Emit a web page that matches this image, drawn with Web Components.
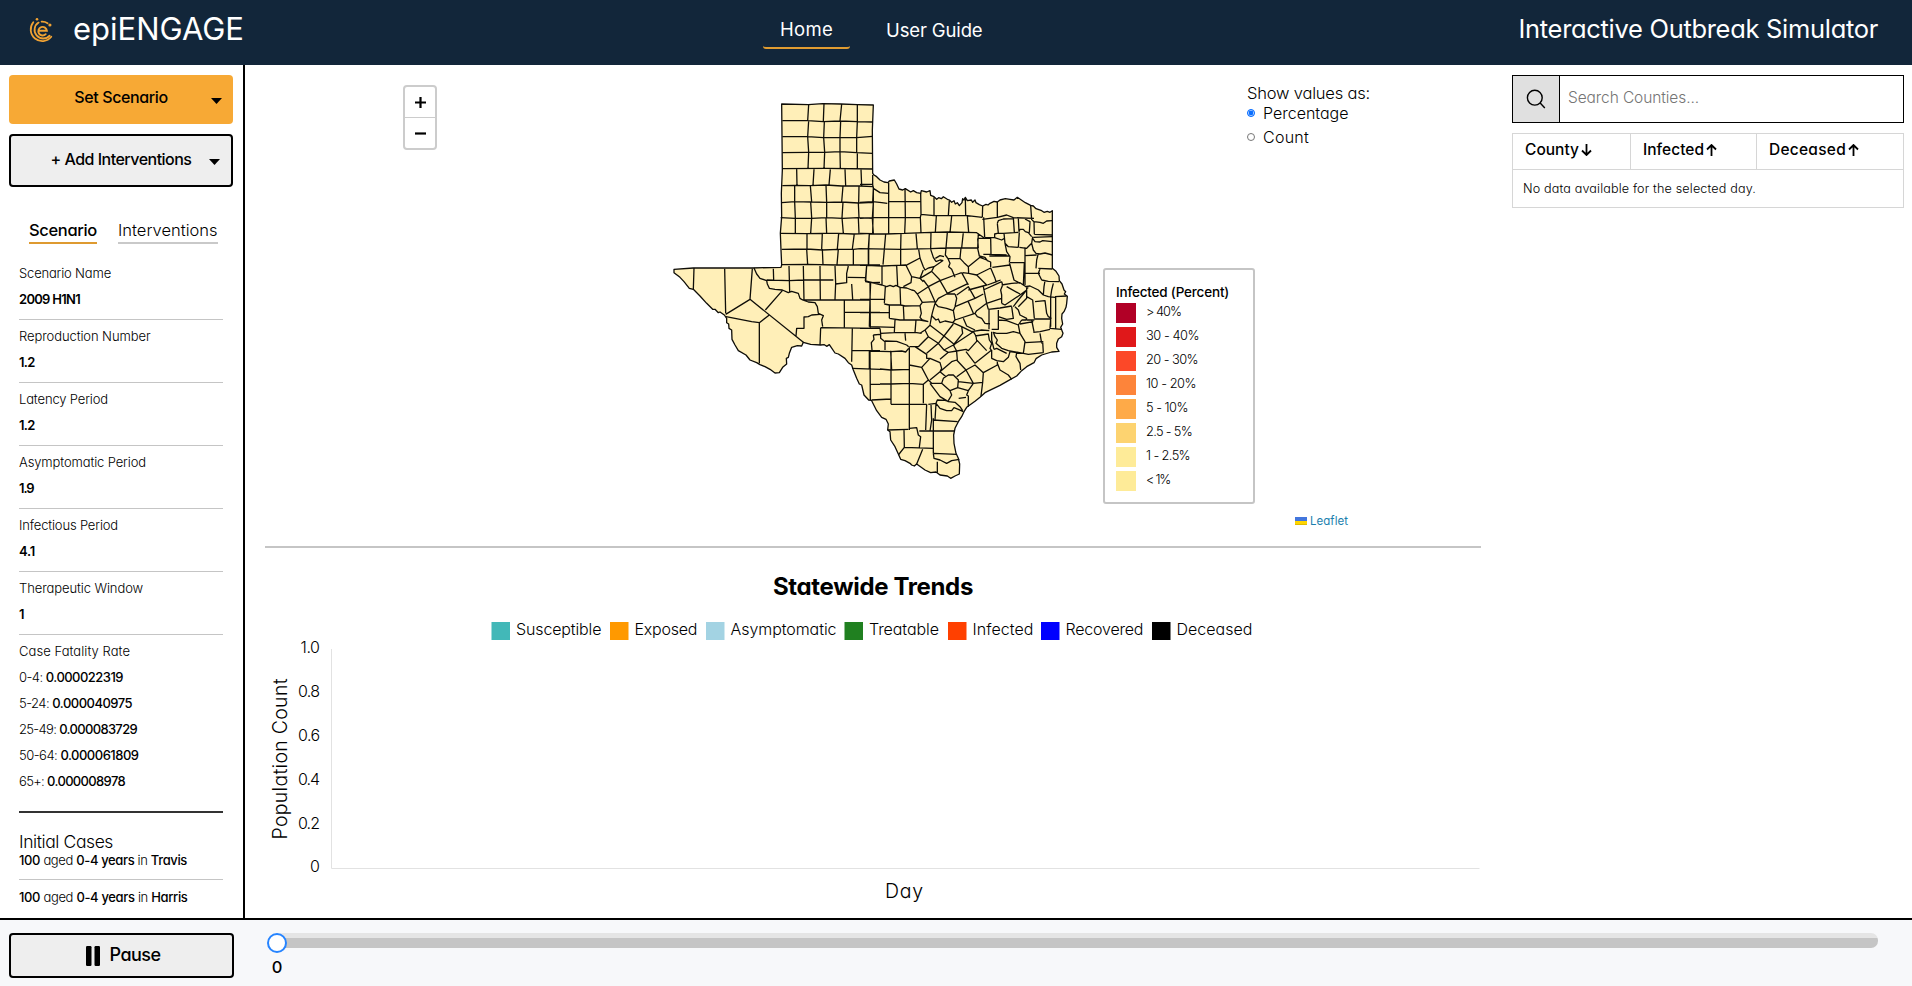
<!DOCTYPE html>
<html lang="en">
<head>
<meta charset="utf-8">
<title>epiENGAGE Interactive Outbreak Simulator</title>
<style>
html,body{margin:0;height:100%;overflow:hidden;background:#fff}
body{font-family:Inter,"Open Sans",sans-serif;font-weight:300;font-feature-settings:"cv11","ss03";color:#000}
</style>
</head>
<body>
<script>
const define=(name,html,init)=>customElements.define(name,class extends HTMLElement{
  constructor(){super();this.attachShadow({mode:'open'});}
  connectedCallback(){
    if(this.ready)return;this.ready=true;
    const t=document.createElement('template');
    t.innerHTML=typeof html==='function'?html(this):html;
    this.shadowRoot.append(t.content.cloneNode(true));
    if(init)init(this,this.shadowRoot);
  }
});

/* Single line of text tracked to a given measure. */
define('fit-text','<style>:host{display:inline-block;white-space:nowrap}</style><span><slot></slot></span>',(el,root)=>{
  const w=+el.getAttribute('w'),s=root.querySelector('span');
  if(!w)return;
  el.style.letterSpacing='0px';
  const n=el.textContent.length,natural=s.getBoundingClientRect().width;
  el.style.letterSpacing=((w+1-natural)/n).toFixed(3)+'px';
});

define('engage-logo',`<style>:host{display:block;width:26px;height:28px}svg{display:block}</style>
<svg width="26" height="28" viewBox="0 0 26 28" fill="none" stroke="#f0a233" stroke-width="1.8" stroke-linecap="round">
<path d="M4.3 5.2A11.4 11.4 0 1 0 22.3 19.8"/><path d="M9.6 5.6A8.6 8.6 0 1 0 20.6 18.6"/><path d="M12.6 4.6A9.4 9.4 0 0 1 18.6 6.2"/>
<path d="M10.2 13.8H17.9A4.3 4.3 0 1 0 16.7 17.2" stroke-width="1.9"/>
<g fill="#f0a233" stroke="none"><circle cx="8" cy="2.2" r="1.3"/><circle cx="20.9" cy="8" r="1.6"/></g></svg>`);

define('app-header',`<style>
:host{display:grid;grid-template-columns:763px 1fr auto;height:65px;background:#12263a;color:#fff;font-weight:400}
.brand{display:flex;align-items:center;padding-left:29px;gap:18px}
.brand engage-logo{margin-top:-3px}.brand fit-text{font-size:31px;line-height:40px;margin-top:-7px}
nav{display:flex;gap:36px;font-size:18.5px}
.tab{box-sizing:border-box;height:49px;line-height:24px;padding-top:17px}
.on{width:87px;text-align:center;border-bottom:2.5px solid #e09c31;border-radius:3px}
.title{font-size:25.5px;line-height:40px;padding:9px 34px 0 0}
</style>
<div class="brand"><engage-logo></engage-logo><fit-text w="170">epiENGAGE</fit-text></div>
<nav><div class="tab on"><fit-text w="52">Home</fit-text></div><div class="tab" style="padding-top:18px"><fit-text w="95.5">User Guide</fit-text></div></nav>
<div class="title"><fit-text w="358.5">Interactive Outbreak Simulator</fit-text></div>`);

define('menu-button',el=>`<style>
:host{display:flex;box-sizing:border-box;width:224px;height:49px;border-radius:4px;background:#f7a935;justify-content:center;position:relative;font-size:16px;font-weight:500;line-height:24px;padding-top:10px}
:host([outlined]){height:53px;border:2px solid #000;background:#eee;padding-top:11px}
svg{position:absolute;right:11px;top:23px}
</style><fit-text w="${el.getAttribute('w')}">${el.getAttribute('label')}</fit-text><svg width="11" height="6"><path d="M0 0h11L5.5 6z"/></svg>`);

define('param-row',el=>`<style>
:host{display:block;box-sizing:border-box;height:63px;padding-top:3px;border-bottom:1px solid #c5c5c5;font-size:13px;line-height:27px}
div{height:26px}b{font-weight:600}
</style><div><fit-text w="${el.getAttribute('lw')}">${el.getAttribute('label')}</fit-text></div><div><b><fit-text w="${el.getAttribute('vw')}">${el.getAttribute('value')}</fit-text></b></div>`);

const params=[['Scenario Name',91,'2009 H1N1',60],['Reproduction Number',130.5,'1.2',14.5],['Latency Period',88,'1.2',14.5],['Asymptomatic Period',126,'1.9',13.5],['Infectious Period',98,'4.1',15],['Therapeutic Window',123,'1',5]];
const rates=[['0-4','0.000022319',103],['5-24','0.000040975',112],['25-49','0.000083729',117],['50-64','0.000061809',118.5],['65+','0.000008978',105]];
define('scenario-panel',`<style>
:host{display:block;box-sizing:border-box;width:245px;border-right:2px solid #000;padding:10px 10px 0 9px;overflow:hidden}
menu-button+menu-button{margin-top:10px}
.tabs{display:flex;gap:21px;padding:33px 0 0 20px;font-size:16.5px;line-height:20px;height:37px}
.tabs div{height:22px;border-bottom:2px solid #c9c9c9}.tabs .on{border-color:#de9a30;font-weight:500}
.list{padding-left:10px;width:204px}
.rates{height:173px;padding-top:3px;border-bottom:2px solid #333;font-size:13px;line-height:27px}
.rates div{height:26px}b{font-weight:500}
h3{margin:0;padding-top:15px;font:inherit;font-size:17.5px;line-height:28px;height:23px}
.case{font-size:13px;line-height:18px;height:18px;padding-bottom:10px;border-bottom:1px solid #c5c5c5}
.case+.case{padding-top:8px;border:0}
</style>
<menu-button label="Set Scenario" w="92.5"></menu-button><menu-button outlined label="+ Add Interventions" w="140"></menu-button>
<div class="tabs"><div class="on"><fit-text w="67">Scenario</fit-text></div><div><fit-text w="98.5">Interventions</fit-text></div></div>
<div class="list">${params.map(p=>`<param-row label="${p[0]}" lw="${p[1]}" value="${p[2]}" vw="${p[3]}"></param-row>`).join('')}
<div class="rates"><div><fit-text w="110">Case Fatality Rate</fit-text></div>${rates.map(r=>`<div><fit-text w="${r[2]}">${r[0]}: <b>${r[1]}</b></fit-text></div>`).join('')}</div>
<h3><fit-text w="93">Initial Cases</fit-text></h3>
<div class="case"><fit-text w="167"><b>100</b> aged <b>0-4 years</b> in <b>Travis</b></fit-text></div>
<div class="case"><fit-text w="167.5"><b>100</b> aged <b>0-4 years</b> in <b>Harris</b></fit-text></div></div>`);

/* State outline and county borders; each block has its own origin, in thirds of a pixel. */
const NW=[0,0],NE=[600,240],SW=[0,480],SE=[600,690];
const outline=[
[NW,'365,42 445,44 488,41 542,42 592,44 640,45 637,120 638,250'],
[NE,'42,15 50,20 60,30 72,36 84,38 88,33 103,30 110,42 117,57 128,60 136,56 152,66 160,62 170,68 182,70 184,62 200,66 210,62 212,76 222,80 230,88 236,83 244,86 250,80 262,88 268,90 275,97 282,92 286,102 292,98 298,107 306,98 308,86 312,90 316,82 322,92 334,90 338,97 345,90 348,98 358,104 368,108 378,103 384,105 390,100 402,94 412,96 420,90 436,86 450,88 462,90 472,82 484,90 496,98 512,106 520,108 528,116 545,122 552,127 562,124 570,127 577,122 577,190 577,250 577,295 588,304 597,318 598,332 606,342 612,360 617,365 613,372 622,379 620,400 618,412 612,425 606,432 605,445 608,462 602,472 609,490 605,500 595,507 590,520 590,532 597,544'],
[SE,'575,96 545,105 528,116 522,128 500,140 485,152 470,168 445,182 420,196 395,208 375,218 360,232 345,244 320,262 312,275 305,290 295,305 285,325 281,345 282,370 288,400 295,415 299,432 298,462 285,468 272,475 262,468 240,465 228,456 212,458 195,450 170,432 163,438 155,435 150,430 135,422 122,418 115,402 105,380 92,360 90,335 83,330 85,312 78,298 65,292 50,272 35,242'],
[SW,'634,451 626,450 612,435 605,405 598,402 590,385 580,360 575,345 565,338 555,325 535,312 525,309 512,290 508,284 500,289 493,284 482,285 452,283 430,277 425,288 412,287 395,292 388,310 385,322 379,325 380,342 368,352 358,368 345,369 330,358 315,350 300,344 290,338 270,330 258,315 235,302 225,285 216,268 215,240 207,235 206,222 200,218 200,205 193,195 180,186 175,188 165,178 158,178 140,160 120,138 100,118 88,115 72,95 60,82 42,68 42,58 100,54 195,54 275,54 363,52 365,45'],
[NW,'363,480 361,430 365,380 364,310 367,240 366,140']];
const borders=[
[NW,`367,92 443,92 490,95 540,93 592,95 638,96|367,140 443,140 490,143 540,142 590,143 638,139|367,188 443,187 492,187 540,185 590,188 638,190|367,236 500,235 638,237|367,287 405,286 450,287 498,285 545,288 600,288 640,290|365,338 405,335 455,336 500,337 545,336 595,339 640,337|362,383 405,385 455,385 500,383 548,385 595,383 640,385|362,430 440,431 487,430 535,430 580,432 638,430|365,478 440,477 487,480 535,478 580,478 600,476|365,524 440,523 530,525 600,525
|446,44 443,92|492,41 490,93|545,42 540,93|592,44 592,94|446,92 443,140|493,95 491,143|542,93 540,142|592,95 590,143|443,140 446,187|491,143 494,187|540,142 540,187|590,143 590,188|446,187 444,236|494,187 492,236|540,187 541,236|592,188 592,236|410,238 411,286|462,238 459,286|511,238 507,285|555,238 557,287|603,238 605,287|404,287 404,336|451,287 455,336|498,286 500,336|549,288 545,336|597,288 596,338|404,336 406,383|452,336 455,383|500,336 500,383|549,336 546,383|595,338 597,383|640,290 640,337 637,385 640,430|406,383 406,430|455,383 452,430|498,383 500,430|546,383 550,430|595,383 597,430|441,430 441,477|487,430 485,477|536,430 532,477|583,430 577,477|628,430 626,477|440,477 443,524|487,477 489,524|535,477 531,524|580,477 580,524|626,477 626,524`],
[NE,`0,43 38,43 38,15|40,55 60,68 86,70|38,43 40,55 38,97|0,97 38,95 65,98 82,100|86,38 86,95|86,95 135,94 182,95|135,56 136,142|182,70 183,133|183,133 222,137 265,137 316,136 367,142|222,82 222,137|268,92 265,137|316,85 317,136|368,108 367,142|412,96 412,142 367,148|0,145 38,143 86,142 136,143 183,142|183,133 181,142|40,97 38,190|86,95 86,190|136,143 134,190|181,142 183,188|229,138 226,187|275,138 270,188|322,138 326,187|371,142 374,202|0,190 78,192 134,190 213,187 262,186 350,188 372,203|28,190 25,236|77,192 73,238|123,190 122,236|168,190 172,236|213,187 212,236|262,187 258,234|310,187 305,234|355,190 353,235|0,236 122,238 212,236 258,234 353,234|0,286 20,286 66,288 110,286 138,285|25,238 25,284|73,238 69,284|122,238 122,284
|20,286 16,333|66,288 66,345|110,286 113,348|16,333 66,345 80,350 90,346 100,350 108,346 120,352 140,354 155,360 163,362 172,372|0,388 76,388|32,337 30,388|76,350 73,400|120,350 122,405|73,402 88,405 122,405 135,408 180,407|0,428 88,428|30,388 28,470|88,405 88,445|130,408 132,448|88,445 120,450 180,450|28,470 105,472|0,475 60,475|105,450 103,487 165,488|168,450 165,487|180,450 205,455|60,475 62,490 103,488|62,490 62,505 75,515 75,540|40,495 60,493|40,495 42,508 34,518 36,540|135,490 137,512|75,513 110,514 140,525 146,530|28,542 28,597|92,542 95,600
|138,286 180,264|176,238 180,264 190,290 195,300 205,294|212,238 220,262 228,275|226,265 240,257 252,260|228,275 240,270 250,272|205,294 222,290 248,272|258,234 256,255 264,266|264,266 300,265 303,234|300,265 312,278 325,290 326,310|138,286 155,320 153,338 130,350|155,320 180,325 190,335|190,300 180,325|180,325 215,304 222,290|215,304 240,330|190,330 205,350 240,332 285,315 305,308|264,266 270,280 266,290 275,298 285,322|172,372 205,350|240,332 262,370|205,350 225,395|172,372 187,397 225,395|225,400 235,385 260,372 285,372|262,370 325,340|305,308 325,345|326,310 308,308|326,310 350,315 380,345 325,360|325,290 360,262 380,270|350,315 392,294|353,235 358,258 375,262 382,272 392,276 392,292|392,294 405,325 408,335 422,330|382,345 412,334|290,375 325,350 345,385 328,392 285,410|370,360 425,335|345,385 370,372|370,350 380,400|285,372 290,385 285,410|325,395 340,430
|187,397 180,407 184,430 180,442 187,450 205,455|225,400 218,425 215,437|225,400 235,410 260,415 280,422 285,410|280,422 285,450 278,458|285,450 345,430|215,437 210,465|215,437 228,450 235,447 240,458 255,453 278,458|345,430 352,440 365,445 375,460 390,462|345,430 350,422 380,400 425,385|310,445 320,468 345,480|278,458 305,470 335,485 365,480 388,482|305,470 308,490 280,525
|412,160 415,152 430,147 460,146|412,142 440,135 460,143 522,145|412,160 415,190|404,203 404,192 412,190 430,190|404,203 425,210 432,206|374,202 404,203|475,145 477,185|460,143 463,187|430,190 475,187|477,185 480,178 490,178 496,185 505,188 515,200|512,106 515,150|495,147 510,155 508,188|516,150 522,155 540,157 550,160 560,153 577,152|523,193 577,195|522,155 523,193|432,190 435,220 445,230 475,232|478,187 475,232|478,232 500,235 515,220 518,200|520,202 577,200|518,205 525,215 540,216 548,212 577,215|515,220 520,240 528,250 540,252 555,249 577,255|392,205 393,253|353,205 355,235|355,205 392,205|370,253 393,253 440,255|435,220 440,245 450,260 448,278|450,278 493,278|495,232 495,310|535,250 530,270 528,295|495,257 530,255|535,295 577,297|388,258 448,258|448,280 450,285 397,292|450,285 462,330 480,340|493,278 490,345|495,310 540,310|540,297 535,310 545,330|545,330 565,334 597,335|495,345 495,310|490,345 505,355|425,345 455,340 480,338 490,345|425,335 428,345 422,360 425,375 425,400|495,350 510,348 535,360 550,375 565,380 585,382|555,332 552,350 550,375|580,340 575,360 572,380|585,380 620,378|587,380 587,475|572,382 572,470|500,360 480,375 435,405 425,400|385,418 420,414 455,408|380,400 385,418|500,360 490,372 475,390 460,410|440,350 480,372|500,380 518,390 523,445|500,350 500,385 475,410|525,395 555,392 560,430 565,440 575,445|523,447 570,447|465,410 475,420 480,435 500,445 498,450 485,450|455,410 460,445 440,448 415,440|415,420 415,478 395,478|387,418 387,478|415,450 440,452 475,465|485,450 475,465 480,490|515,450 522,485|480,462 520,455|572,447 570,475 605,478|520,487 540,485 570,478|540,490 545,520|480,490 495,515 490,550|495,518 550,515|548,515 550,548|490,550 505,553 550,548|480,490 460,485 440,490 410,490|410,490 400,487 405,500 412,510 408,520 425,535 445,542 490,550|500,450 523,450`],
[SW,`102,54 100,118|194,56 197,190|277,56 270,148|197,193 270,148 430,277|198,200 275,215 298,218 328,195|298,218 298,340|316,180 367,122|282,54 290,72 300,85 320,92 322,102 328,115 345,118 367,120 385,128 395,124 415,130 420,145 428,150 445,156 465,158 472,170 475,190 490,197 485,210 488,230|480,193 455,195 445,200 432,201 432,235 410,235 408,258|320,90 388,92 430,90 520,90|340,56 341,90|387,48 389,125|430,48 432,150|480,48 481,148|525,48 527,100 525,148|428,150 630,150|600,45 660,45|565,48 560,70 560,98 527,102|563,82 615,83|575,102 578,148|620,48 617,95 630,98 660,97|630,98 631,235|553,152 553,232|553,187 660,187|482,233 660,235|482,233 480,285|577,235 575,335|577,302 660,302|576,355 660,358|630,302 631,450|631,403 660,403`],
[SE,`30,93 92,95 125,93 137,96 146,85|60,147 92,150 148,148|60,192 92,192 148,190 190,193|93,95 93,253|35,240 93,237|93,253 200,253|148,82 148,330|190,193 190,250|83,330 145,328|132,330 133,382 115,405|148,325 170,323 175,345 182,350 178,382|133,382 220,385|178,333 220,333|200,253 197,330|213,253 215,300 210,333|188,388 170,432|220,295 220,400|220,300 293,305|228,250 225,300|220,333 283,333|222,400 290,403|220,400 222,415 240,420 260,430 275,422 298,418|232,425 232,458|205,253 228,250 232,240 255,241 268,245|228,250 240,265 260,272 275,272 282,263 295,268 310,275|210,190 240,230 265,245 285,247 300,260 308,272|205,180 190,193|148,135 185,142 205,180 215,190 245,190|185,142 210,115 240,128 245,145 240,155 210,180|240,155 275,125 290,120|245,190 250,175 265,165 280,165 295,180 293,203 270,212 245,190|240,155 258,170|265,242 275,225 270,212|293,203 325,212 320,225 325,228 325,260|296,235 318,232|290,120 318,150 290,170|318,150 340,190 325,212|295,185 340,190 368,187|318,150 345,135 370,158 368,187 363,228|370,158 412,135|290,95 292,120|318,95 345,130|345,130 395,90|412,130 420,150 445,165 455,178|395,90 395,115 410,122 430,125 445,112 450,95|412,125 412,135|450,95 470,98 468,110 480,130 482,150|470,100 490,100|290,93 318,88 325,92 352,62 380,92|280,75 290,93 265,97 240,118|280,75 340,35|148,80 175,80 205,50|165,80 200,103 200,115 210,115|175,80 195,60|200,100 235,70|205,50 235,70 252,48 285,75|252,48 280,12|235,70 252,90 265,97|252,90 280,75|210,16 252,48|195,30 205,50|180,40 195,30 210,16|165,37 185,40|340,35 348,48 350,62|345,48 385,42 388,60 395,70 390,85 395,92|395,35 395,60 402,88|402,88 410,85 440,100`]];
const seg=(o,s)=>s.trim().split(/\s+/).map(p=>{const[x,y]=p.split(',').map(Number);return(x+o[0])+' '+(y+o[1])}).join('L');
define('texas-map',`<style>:host{display:block;width:420px;height:400px}svg{display:block}</style>
<svg width="420" height="400" viewBox="0 0 1260 1200" stroke="#0e0d08" stroke-width="3.9" stroke-linejoin="round">
<path fill="#ffefb8" d="M${outline.map(s=>seg(...s)).join('L')}Z"/>
<path fill="none" d="${borders.map(([o,s])=>s.split('|').map(l=>'M'+seg(o,l)).join('')).join('')}"/></svg>`);

define('zoom-control',`<style>:host{display:block;box-sizing:border-box;width:34px;height:65px;border:2px solid #ccc;border-radius:4px;background:#fff}
div{height:30px;display:grid;place-items:center}div+div{border-top:1px solid #ccc}svg{display:block}</style>
<div><svg width="11" height="11" stroke="#000" stroke-width="2.2"><path d="M0 5.5h11M5.5 0v11"/></svg></div><div><svg width="11" height="11" stroke="#000" stroke-width="2.2"><path d="M0 5.5h11"/></svg></div>`);

const bins=[['#b10026','&gt; 40%',34],['#e0181a','30 - 40%',52],['#fc4828','20 - 30%',51],['#fd843a','10 - 20%',49],['#feaa48','5 - 10%',41],['#fdd370','2.5 - 5%',45],['#feeb98','1 - 2.5%',43],['#feeb98','&lt; 1%',23]];
define('map-legend',`<style>:host{display:block;box-sizing:border-box;width:152px;height:236px;border:2px solid #c5c5c5;border-radius:3px;background:#fff;padding:13px 11px}
h4{margin:0;font-size:13.5px;font-weight:500;line-height:18px;height:20px}
.r{display:flex;gap:10px;height:24px;font-size:12.8px;line-height:17px}i{width:20px;height:20px}</style>
<h4><fit-text w="112">Infected (Percent)</fit-text></h4>${bins.map(b=>`<div class="r"><i style="background:${b[0]}"></i><fit-text w="${b[2]}">${b[1]}</fit-text></div>`).join('')}`);

define('value-toggle',`<style>:host{display:block;font-size:16px}
.h{line-height:20px;height:18px;margin-top:-1px;font-size:16.5px}.r{display:flex;align-items:center;gap:8px;height:24px;line-height:24px}
i{box-sizing:border-box;width:8px;height:8px;border:1px solid #777;border-radius:50%;margin-top:-1px}
.on{border:1px solid #0b6fff;background:#0b6fff;box-shadow:inset 0 0 0 .6px #fff}</style>
<div class="h"><fit-text w="122">Show values as:</fit-text></div><div class="r"><i class="on"></i><fit-text w="84.5">Percentage</fit-text></div><div class="r"><i></i><fit-text w="45">Count</fit-text></div>`);

define('map-section',`<style>:host{display:block;position:relative;height:481px;box-sizing:border-box;padding:25px 0 0 395px;border-bottom:0}
zoom-control,map-legend,value-toggle,.attr{position:absolute}
zoom-control{left:138px;top:20px}map-legend{left:838px;top:203px}value-toggle{left:982px;top:19px}
.attr{left:1030px;top:448px;display:flex;gap:3px;font-size:11.5px;line-height:16px;color:#1c7fae;align-items:center;font-weight:400}</style>
<texas-map></texas-map><zoom-control></zoom-control><value-toggle></value-toggle><map-legend></map-legend>
<div class="attr"><svg width="12" height="8"><path fill="#4376dd" d="M0 0h12v4H0z"/><path fill="#ffd500" d="M0 4h12v3H0z"/><path fill="#e0bc00" d="M0 7h12v1H0z"/></svg><fit-text w="37">Leaflet</fit-text></div>`);

const series=[['#42b8b8','Susceptible',491.5,84.5],['#ff9900','Exposed',610,62],['#a3d3e3','Asymptomatic',706,105],['#208020','Treatable',844.5,69],['#ff4000','Infected',948,60],['#0000ff','Recovered',1041,77],['#000','Deceased',1152,75]];
define('trend-chart',`<style>:host{display:block;border-top:2px solid #c5c5c5}
h2{margin:0;padding-top:25px;font-size:24px;font-weight:700;line-height:28px;height:28px;text-align:center}
svg{display:block;margin-top:-1px}text{font-family:inherit}</style>
<h2><fit-text w="199">Statewide Trends</fit-text></h2>
<svg width="1216" height="318" viewBox="265 600 1216 318">
<g font-size="16">${series.map(s=>`<rect x="${s[2]}" y="622" width="18.5" height="18" fill="${s[0]}"/><text x="${s[2]+24.5}" y="635" textLength="${s[3]+1}">${s[1]}</text>`).join('')}
${['1.0','0.8','0.6','0.4','0.2','0'].map((t,i)=>`<text x="320" y="${653.3+i*43.8}" text-anchor="end" ${i<5?`textLength="${i?22:19.5}"`:''}>${t}</text>`).join('')}</g>
<path d="M331.5 649V868.5H1479.5" fill="none" stroke="#e2e2e2"/>
<g font-size="19.5"><text transform="translate(287 839.5) rotate(-90)" textLength="161">Population Count</text><text x="885" y="898" textLength="38">Day</text></g></svg>`);

define('county-search',`<style>:host{display:flex;box-sizing:border-box;width:392px;height:48px;border:1px solid #000;font-size:15.5px;color:#757575;line-height:44px}
.i{width:46px;background:#e0e0e0;border-right:1px solid #000;display:grid;place-items:center}fit-text{margin-left:8px}</style>
<div class="i"><svg width="20" height="20" fill="none" stroke="#000" stroke-width="1.4"><circle cx="8.8" cy="8.7" r="7.4"/><path d="M14.2 14l4.6 5"/></svg></div><fit-text w="130">Search Counties...</fit-text>`);

define('sort-arrow',el=>`<style>:host{display:inline-block;width:11px;height:12px}svg{display:block}</style><svg width="11" height="12" fill="none" stroke="#000" stroke-width="1.8"><path d="${el.hasAttribute('down')?'M5.5 0v11M1 6.5l4.5 4.5L10 6.5':'M5.5 12V1M1 5.5L5.5 1 10 5.5'}"/></svg>`);

define('county-table',`<style>:host{display:block;box-sizing:border-box;width:392px;height:75px;border:1px solid #d6d6d6;margin-top:10px}
.h{display:grid;grid-template-columns:117px 126px 1fr;height:35px;border-bottom:1px solid #d6d6d6;font-size:15.5px;font-weight:500;line-height:32px}
.h div{display:flex;gap:2px;padding-left:12px}.h div+div{border-left:1px solid #d6d6d6}sort-arrow{margin-top:10px}
.e{font-size:12.6px;line-height:37px;padding-left:10px}</style>
<div class="h"><div><fit-text w="53">County</fit-text><sort-arrow down></sort-arrow></div><div><fit-text w="60">Infected</fit-text><sort-arrow></sort-arrow></div><div><fit-text w="76">Deceased</fit-text><sort-arrow></sort-arrow></div></div>
<div class="e"><fit-text w="232">No data available for the selected day.</fit-text></div>`);

define('play-bar',`<style>:host{display:flex;box-sizing:border-box;height:68px;border-top:2px solid #000;background:#f7f8fa;padding-left:9px}
.b{box-sizing:border-box;width:225px;height:45px;margin-top:13px;border:2px solid #000;border-radius:4px;background:#eee;display:flex;gap:10px;justify-content:center;align-items:center;font-size:18px;font-weight:500;line-height:24px;padding-left:3px}
.b fit-text{margin-top:-1px}
.s{width:1602px;margin:13px 0 0 42px}
.t{height:15px;border-radius:7px;background:linear-gradient(#e5e5e5 5px,#c5c5c5 5px);position:relative}
.t i{position:absolute;left:-9px;top:0;box-sizing:border-box;width:20px;height:20px;border-radius:50%;border:2px solid #2684ff;background:#fff}
.v{width:20px;margin-left:-9px;text-align:center;font-size:16.5px;font-weight:500;line-height:20px;padding-top:9px}</style>
<div class="b"><svg width="14" height="20"><rect width="5.5" height="20" rx="1.2"/><rect x="8.5" width="5.5" height="20" rx="1.2"/></svg><fit-text w="50">Pause</fit-text></div>
<div class="s"><div class="t"><i></i></div><div class="v">0</div></div>`);

define('outbreak-app',`<style>:host{display:grid;grid-template-rows:65px 853px 68px;width:1912px;height:986px}
main{display:grid;grid-template-columns:245px 1236px 1fr;overflow:hidden}
.c{padding-left:20px;overflow:hidden}.r{padding:10px 0 0 31px}</style>
<app-header></app-header><main><scenario-panel></scenario-panel><div class="c"><map-section></map-section><trend-chart></trend-chart></div><div class="r"><county-search></county-search><county-table></county-table></div></main><play-bar></play-bar>`);
</script>
<outbreak-app></outbreak-app>
</body>
</html>
